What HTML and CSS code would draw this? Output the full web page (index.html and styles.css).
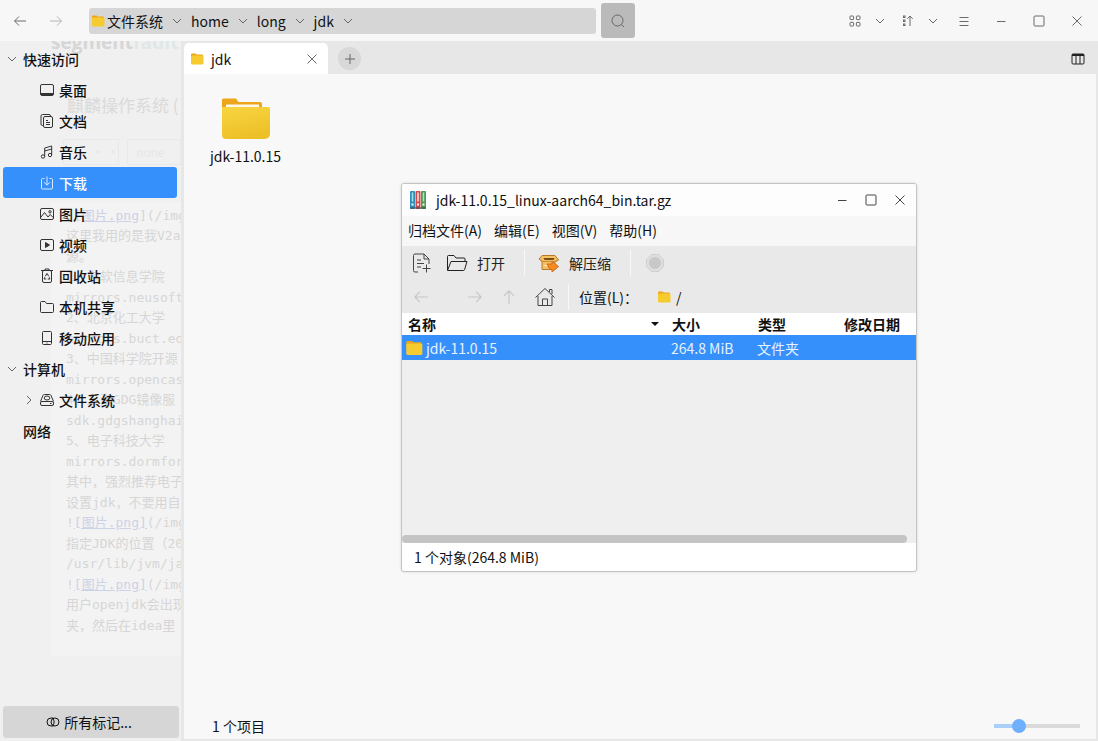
FILE: index.html
```html
<!DOCTYPE html>
<html lang="zh-CN">
<head>
<meta charset="utf-8">
<title>jdk</title>
<link rel="stylesheet" href="styles.css">
</head>
<body>
<svg class="defs" width="0" height="0" aria-hidden="true">
  <defs>
    <linearGradient id="gold" x1="0" y1="0" x2="0.3" y2="1"><stop offset="0" stop-color="#f8d541"/><stop offset="1" stop-color="#edc028"/></linearGradient>
    <symbol id="chev" viewBox="0 0 10 10"><path d="M1 3 5 7 9 3"/></symbol>
    <symbol id="arrow" viewBox="0 0 16 16"><path d="M14 8H2.500M7 3.500 2.500 8 7 12.500"/></symbol>
    <symbol id="close" viewBox="0 0 12 12"><path d="M1.500 1.500l9 9M10.500 1.500l-9 9"/></symbol>
    <symbol id="max" viewBox="0 0 12 12"><rect x="1" y="1" width="10" height="10" rx="1"/></symbol>
    <symbol id="min" viewBox="0 0 12 12"><path d="M2 6.500h8.500"/></symbol>
    <symbol id="folder" viewBox="0 0 14 12"><path d="M1 1.500a1 1 0 0 1 1-1h3.500l1 1H12a1 1 0 0 1 1 1V6H1z" fill="#eda51c" stroke="none"/><rect x="1" y="2.500" width="12.500" height="9" rx="1.200" fill="#f5cb30" stroke="none"/></symbol>
  </defs>
</svg>

<header class="topbar">
  <nav class="history">
    <button class="icon-btn" aria-label="后退"><svg class="i16"><use href="#arrow"/></svg></button>
    <button class="icon-btn faded" aria-label="前进"><svg class="i16 flip"><use href="#arrow"/></svg></button>
  </nav>
  <nav class="path" aria-label="路径">
    <svg class="folder-sm"><use href="#folder"/></svg>
    <button class="crumb">文件系统</button><svg class="chev"><use href="#chev"/></svg>
    <button class="crumb">home</button><svg class="chev"><use href="#chev"/></svg>
    <button class="crumb">long</button><svg class="chev"><use href="#chev"/></svg>
    <button class="crumb">jdk</button><svg class="chev"><use href="#chev"/></svg>
  </nav>
  <button class="search" aria-label="搜索"><svg class="i16" viewBox="0 0 16 16"><circle cx="7.500" cy="7.500" r="5.500"/><path d="M11.500 11.500l2.500 2.500"/></svg></button>
  <div class="spacer"></div>
  <div class="tools">
    <button class="icon-btn" aria-label="视图"><svg class="i12" viewBox="0 0 12 12"><rect x="1" y="1" width="3.600" height="3.600" rx=".6"/><rect x="7.400" y="1" width="3.600" height="3.600" rx=".6"/><rect x="1" y="7.400" width="3.600" height="3.600" rx=".6"/><rect x="7.400" y="7.400" width="3.600" height="3.600" rx=".6"/></svg></button>
    <button class="icon-btn" aria-label="视图选项"><svg class="chev"><use href="#chev"/></svg></button>
  </div>
  <div class="tools">
    <button class="icon-btn" aria-label="排序"><svg class="i12" viewBox="0 0 12 12"><rect x="1.500" y="1" width="1.500" height="1.500"/><rect x="1.500" y="5" width="1.500" height="1.500"/><rect x="1.500" y="9" width="1.500" height="1.500"/><path d="M8 11V1M5.300 3.800 8 1l2.700 2.800"/></svg></button>
    <button class="icon-btn" aria-label="排序选项"><svg class="chev"><use href="#chev"/></svg></button>
  </div>
  <div class="window-tools">
    <button class="icon-btn menu-btn" aria-label="菜单"><svg class="i12" viewBox="0 0 12 12"><path d="M1.500 2.500h9M1.500 6.500h9M1.500 10.500h9"/></svg></button>
    <button class="icon-btn" aria-label="最小化"><svg class="i12"><use href="#min"/></svg></button>
    <button class="icon-btn" aria-label="最大化"><svg class="i12"><use href="#max"/></svg></button>
    <button class="icon-btn" aria-label="关闭"><svg class="i12"><use href="#close"/></svg></button>
  </div>
</header>

<div class="body">
  <aside class="sidebar">
    <div class="ghost" aria-hidden="true">
      <div class="ghost-logo">segment<span>fault</span></div>
      <div class="ghost-title">麒麟操作系统 (</div>
      <div class="ghost-bar"><span>· ·</span><span>none</span></div>
      <div class="ghost-page">
        <p>![<u>图片.png</u>](/img</p><p>这里我用的是我V2a</p><p>源。</p><p>1、东软信息学院</p><p>mirrors.neusoft</p><p>2、北京化工大学</p><p>mirrors.buct.edu</p><p>3、中国科学院开源</p><p>mirrors.opencas</p><p>4、上海GDG镜像服</p><p>sdk.gdgshanghai</p><p>5、电子科技大学</p><p>mirrors.dormfor</p><p>其中，强烈推荐电子</p><p>设置jdk，不要用自</p><p>!<u>[图片.png]</u>(/img</p><p>指定JDK的位置（20</p><p>/usr/lib/jvm/ja</p><p>!<u>[图片.png]</u>(/img</p><p>用户openjdk会出现</p><p>夹，然后在idea里</p>
      </div>
    </div>
    <nav class="places">
      <button class="group"><svg class="chev"><use href="#chev"/></svg>快速访问</button>
      <button class="place"><svg class="i16" viewBox="0 0 16 16"><rect x="1.500" y="2.500" width="13" height="11" rx="1.500"/><path d="M2 11.500h12M2 12.500h12"/></svg>桌面</button>
      <button class="place"><svg class="i16" viewBox="0 0 16 16"><path d="M4.500 12.500h-1a1.500 1.500 0 0 1-1.500-1.500V3a1.500 1.500 0 0 1 1.500-1.500h6.500a1.500 1.500 0 0 1 1.500 1.500"/><rect x="4.500" y="3.500" width="9" height="11" rx="1.500"/><path d="M7 7.500h2M7 9.500h4M7 11.500h4"/></svg>文档</button>
      <button class="place"><svg class="i16" viewBox="0 0 16 16"><circle cx="4" cy="12.500" r="1.700"/><circle cx="11" cy="11" r="1.700"/><path d="M5.700 12.500V4l7-2v9M5.700 7l7-2"/></svg>音乐</button>
      <button class="place active"><svg class="i16" viewBox="0 0 16 16"><path d="M5.500 3.500h-2a1 1 0 0 0-1 1v8.500a1 1 0 0 0 1 1h9a1 1 0 0 0 1-1V4.500a1 1 0 0 0-1-1h-2M8 1.500v8.500M5 7.200l3 3 3-3"/></svg>下载</button>
      <button class="place"><svg class="i16" viewBox="0 0 16 16"><rect x="1.500" y="2.500" width="13" height="11" rx="1.500"/><path d="M2 11l3.500-4.500L9 11l2.200-2.500 3 3"/><circle cx="11" cy="5.800" r="1.200"/></svg>图片</button>
      <button class="place"><svg class="i16" viewBox="0 0 16 16"><rect x="1.500" y="2.500" width="13" height="11" rx="1.500"/><path d="M6.500 5.500v5L10.500 8z" fill="currentColor"/></svg>视频</button>
      <button class="place"><svg class="i16" viewBox="0 0 16 16"><path d="M2 2.500h12M6 2.500V1h4v1.500"/><rect x="3.500" y="2.500" width="9" height="12" rx="1.500"/><path d="M6.200 8.300 8 5.500l1.800 2.800M10.300 9.300l.6 1.700H8.800M7.200 11H5.100l.6-1.700"/></svg>回收站</button>
      <button class="place"><svg class="i16" viewBox="0 0 16 16"><path d="M1.500 3.500a1 1 0 0 1 1-1H6l1.500 2h6a1 1 0 0 1 1 1v7a1 1 0 0 1-1 1h-11a1 1 0 0 1-1-1z"/></svg>本机共享</button>
      <button class="place"><svg class="i16" viewBox="0 0 16 16"><rect x="3.500" y="1.500" width="9" height="13" rx="1"/><path d="M3.500 11.500h9M7.500 13h1"/></svg>移动应用</button>
      <button class="group"><svg class="chev"><use href="#chev"/></svg>计算机</button>
      <button class="place tree"><svg class="chev side"><use href="#chev"/></svg><svg class="i16" viewBox="0 0 16 16"><path d="M1.500 9.500 4 3.300a1.500 1.500 0 0 1 1.300-.8h5.400a1.500 1.500 0 0 1 1.300.8l2.500 6.200"/><rect x="1.500" y="9.500" width="13" height="4" rx="1.500"/><ellipse cx="8" cy="6" rx="2.800" ry="2"/><path d="M11 11.500h1.500"/></svg>文件系统</button>
      <button class="group plain">网络</button>
    </nav>
    <button class="tags"><svg class="i14" viewBox="0 0 14 14"><path d="M7.500 3H5a4 4 0 0 0 0 8h2.500"/><ellipse cx="9" cy="7" rx="4" ry="4"/><path d="M6.500 3.500a4.500 4.500 0 0 1 0 7"/></svg>所有标记...</button>
  </aside>

  <main class="main">
    <div class="tabs">
      <div class="tab"><svg class="folder-sm"><use href="#folder"/></svg><span>jdk</span><button class="icon-btn" aria-label="关闭标签"><svg class="i12"><use href="#close"/></svg></button></div>
      <button class="add" aria-label="新建标签"><svg class="i12" viewBox="0 0 12 12"><path d="M6 1v10M1 6h10"/></svg></button>
      <button class="icon-btn columns" aria-label="预览"><svg class="i14" viewBox="0 0 14 14"><rect x="1" y="2" width="12" height="10" rx="1"/><path d="M1 3h12" stroke-width="2"/><path d="M5 3v9M9 3v9"/></svg></button>
    </div>
    <section class="files">
      <button class="file">
        <svg class="folder-lg" viewBox="0 0 50 42"><path d="M1 2a1.500 1.500 0 0 1 1.500-1.500H15L17.500 4H39a2 2 0 0 1 2 2v8H1z" fill="#eda51c"/><path d="M5 6.500h33V11H5z" fill="#fff8e8"/><path d="M1 9h46a2 2 0 0 1 2 2v25a5 5 0 0 1-5 5H5a4 4 0 0 1-4-4z" fill="url(#gold)"/></svg>
        <span>jdk-11.0.15</span>
      </button>
    </section>
    <footer class="status">
      <span>1 个项目</span>
      <input class="zoom" type="range" min="0" max="100" value="25" aria-label="图标大小">
    </footer>

    <section class="archive">
      <header class="a-title">
        <svg class="books" viewBox="0 0 18 20"><rect x="1" y="1" width="5" height="18" rx="1" fill="#2e8fb8"/><rect x="6.500" y="1" width="5" height="18" rx="1" fill="#d8484a"/><rect x="12" y="1" width="5" height="18" rx="1" fill="#4f9a50"/><path d="M3.500 2.500v9M14.500 2.500v9" stroke="#a9dfe8" stroke-width="1.500"/><path d="M9 2.500v9" stroke="#f5c1bb" stroke-width="2"/><path d="M2.500 14.500h2M8 14.500h2M13.500 14.500h2" stroke="#fff" stroke-width="2"/><path d="M1 18h16" stroke="#3b4856"/></svg>
        <h1>jdk-11.0.15_linux-aarch64_bin.tar.gz</h1>
        <button class="icon-btn" aria-label="最小化"><svg class="i12"><use href="#min"/></svg></button>
        <button class="icon-btn" aria-label="最大化"><svg class="i12"><use href="#max"/></svg></button>
        <button class="icon-btn" aria-label="关闭"><svg class="i12"><use href="#close"/></svg></button>
      </header>
      <nav class="a-menu"><button>归档文件(A)</button><button>编辑(E)</button><button>视图(V)</button><button>帮助(H)</button></nav>
      <div class="a-tools">
        <div class="a-row">
          <button class="tool" aria-label="新建"><svg class="i22" viewBox="0 0 22 22"><path d="M7 20H4a1.500 1.500 0 0 1-1.500-1.500v-15A1.500 1.500 0 0 1 4 2h9l5 5v5M13 2v5h5M6 8h4M6 11.500h7M6 15h4M15.500 12.500v8M11.500 16.500h8"/></svg></button>
          <button class="tool open"><svg class="i22" viewBox="0 0 22 22"><path d="M1.500 18V4.500a1 1 0 0 1 1-1H8l2 2.500h8a1 1 0 0 1 1 1v2M1.500 18.500 5 9.500h16l-2.500 8.300a1 1 0 0 1-1 .7z"/></svg>打开</button>
          <i class="sep"></i>
          <button class="tool extract"><svg class="i22" viewBox="0 0 22 22"><path d="M4 3.500h13l3.500 4.500-3.500 1.500v8H4v-8L1 7z" fill="#f4c064" stroke="#b8792a"/><path d="M5.500 6h11l-1 2h-9z" fill="#7a4c14" stroke="none"/><path d="M1 7l3 2.500h13L20.500 8" stroke="#c98a35"/><path d="M6.500 13.500h3" stroke="#fff3d6"/><path d="M9 12h5V9.500l6.500 5-6.500 5.500V17.500h-2z" fill="#f68b1f" stroke="#d06c18"/></svg>解压缩</button>
          <i class="sep"></i>
          <button class="tool" aria-label="停止" disabled><svg class="i22" viewBox="0 0 22 22"><path d="M7.500 2.500h7l5 5v7l-5 5h-7l-5-5v-7z" fill="#dedede" stroke="#cfcfcf"/><circle cx="11" cy="11" r="6" fill="#c8c8c8" stroke="none"/></svg></button>
        </div>
        <div class="a-row">
          <button class="tool nav-b" aria-label="后退" disabled><svg class="i18" viewBox="0 0 16 16"><use href="#arrow"/></svg></button>
          <button class="tool nav-f" aria-label="前进" disabled><svg class="i18 flip" viewBox="0 0 16 16"><use href="#arrow"/></svg></button>
          <button class="tool nav-u" aria-label="向上" disabled><svg class="i18 up" viewBox="0 0 16 16"><use href="#arrow"/></svg></button>
          <button class="tool nav-h" aria-label="主目录"><svg class="i22" viewBox="0 0 22 22"><path d="M1.500 11.500 11 2.500l9.500 9M15.500 6V3.500H18V8M4 10v9.500h14V10M8.500 19.500V13h5v6.500"/></svg></button>
          <i class="sep"></i>
          <label for="loc">位置(L)：</label>
          <svg class="folder-sm"><use href="#folder"/></svg>
          <input id="loc" type="text" value="/">
        </div>
      </div>
      <div class="list">
        <table>
          <colgroup><col class="c-name"><col class="c-mid"><col class="c-mid"><col class="c-date"></colgroup>
          <thead><tr><th><div class="sort">名称<svg viewBox="0 0 10 6"><path d="M1 1h8L5 5z" fill="#111" stroke="none"/></svg></div></th><th>大小</th><th>类型</th><th>修改日期</th></tr></thead>
          <tbody><tr><td><div class="entry"><svg viewBox="0 0 14 12"><use href="#folder"/></svg>jdk-11.0.15</div></td><td>264.8 MiB</td><td>文件夹</td><td></td></tr></tbody>
        </table>
        <div class="scroll"></div>
      </div>
      <footer class="a-status">1 个对象(264.8 MiB)</footer>
    </section>
  </main>
</div>
</body>
</html>
```

FILE: styles.css
```css
* { box-sizing: border-box; }
body {
  margin: 0;
  min-height: 100vh;
  display: flex;
  flex-direction: column;
  background: #f7f7f7;
  color: #111;
  font: 14px/20px "Noto Sans CJK SC", sans-serif;
}
button, input {
  font: inherit;
  color: inherit;
  border: 0;
  padding: 0;
  background: none;
}
p, h1 { margin: 0; font: inherit; }
svg { fill: none; stroke: currentColor; stroke-width: 1; flex: none; display: block; }
.defs { position: absolute; }
.i12 { width: 12px; height: 12px; }
.i14 { width: 14px; height: 14px; }
.i16 { width: 16px; height: 16px; }
.i18 { width: 18px; height: 18px; }
.i22 { width: 22px; height: 22px; }
.flip { transform: rotate(180deg); }
.up { transform: rotate(90deg); }
.chev { width: 10px; height: 10px; color: #666; }
.side { transform: rotate(-90deg); }
.folder-sm { width: 14px; height: 12px; }
.icon-btn {
  width: 24px;
  height: 24px;
  display: grid;
  place-items: center;
  color: #6b6b6b;
}

/* top bar */
.topbar { display: flex; align-items: center; height: 41px; padding-right: 9px; }
.history { display: flex; gap: 12px; padding: 0 21px 0 8px; }
.faded { color: #b5b5b5; }
.path {
  flex: 17;
  display: flex;
  align-items: center;
  height: 26px;
  padding-left: 2px;
  border-radius: 3px;
  background: #d6d6d6;
}
.path .crumb { margin-left: 2px; }
.path .chev { margin: 0 7px 0 9px; }
.search {
  width: 34px;
  height: 35px;
  margin-left: 5px;
  display: grid;
  place-items: center;
  border-radius: 3px;
  background: #bababa;
  color: #666;
}
.spacer { flex: 7; }
.tools { display: flex; gap: 1px; margin-right: 4px; }
.window-tools { display: flex; gap: 14px; padding-left: 3px; }
.menu-btn { margin-right: -1px; }

.body { flex: 1; display: flex; }

/* sidebar */
.sidebar {
  position: relative;
  width: 181px;
  flex: none;
  display: flex;
  flex-direction: column;
  justify-content: space-between;
  padding: 2px 3px 3px;
  background: #f0f0f0;
}
.places { position: relative; display: flex; flex-direction: column; font-weight: 500; }
.group, .place { display: flex; align-items: center; height: 31px; text-align: left; }
.group { gap: 6px; padding-left: 4px; }
.group.plain { padding-left: 20px; }
.place { gap: 4px; padding-left: 36px; margin-right: 1px; border-radius: 3px; }
.place .i16 { color: #333; }
.place.tree { padding-left: 21px; }
.place.tree .chev { margin-right: 1px; }
.place.active { background: #3590fb; color: #fff; }
.place.active .i16 { color: #d9eaff; }
.tags {
  position: relative;
  display: flex;
  align-items: center;
  justify-content: center;
  gap: 4px;
  height: 32px;
  padding-right: 4px;
  margin-right: -1px;
  border-radius: 3px;
  background: #d6d6d6;
}

/* document showing faintly through the translucent sidebar */
.ghost {
  position: absolute;
  inset: 0;
  overflow: hidden;
  white-space: nowrap;
  color: #d6d6d6;
  padding-left: 51px;
}
.ghost-logo { height: 14px; line-height: 2px; font-size: 19px; font-weight: 700; font-family: "Open Sans", sans-serif; }
.ghost-logo span { color: #dfe8e6; }
.ghost-title { padding: 38px 0 0 16px; height: 84px; font-size: 17px; line-height: 24px; color: #dadada; }
.ghost-bar { display: flex; gap: 8px; padding-left: 12px; height: 63px; font-size: 12px; line-height: 24px; color: #e6e6e6; }
.ghost-bar span { width: 56px; height: 26px; padding-left: 28px; border: 1px solid #e9e9e9; }
.ghost-bar span + span { padding-left: 8px; }
.ghost-page {
  display: grid;
  grid-auto-rows: 20px 21px;
  padding: 4px 0 20px 15px;
  background: #f3f3f3;
  font: 13px/20px "DejaVu Sans Mono", "Noto Sans CJK SC", monospace;
}
.ghost u { color: #ccd2e6; }

/* main pane */
.main {
  position: relative;
  flex: 1;
  display: flex;
  flex-direction: column;
  padding: 0 2px 2px 3px;
  background: #e7e7e7;
}
.tabs { display: flex; align-items: center; height: 33px; padding-top: 2px; }
.tab {
  width: 144px;
  height: 31px;
  display: flex;
  align-items: center;
  gap: 7px;
  padding: 0 4px 0 6px;
  border-radius: 5px 5px 0 0;
  background: #fff;
}
.tab span { flex: 1; }
.add {
  width: 23px;
  height: 23px;
  margin-left: 10px;
  display: grid;
  place-items: center;
  border-radius: 50%;
  background: #d8d8d8;
  color: #666;
}
.columns { margin: 0 6px 0 auto; color: #222; }
.files { flex: 1; padding: 24px 0 0 21px; background: #f8f8f8; }
.file { display: flex; flex-direction: column; align-items: center; gap: 6px; width: 81px; }
.folder-lg { width: 50px; height: 42px; stroke: none; }
.status {
  display: flex;
  align-items: center;
  justify-content: space-between;
  height: 26px;
  padding: 0 16px 0 28px;
  background: #f8f8f8;
}
.zoom {
  appearance: none;
  width: 86px;
  height: 14px;
  margin: 0;
  background: linear-gradient(to right, #a9cffb 25%, #dadada 25%) center / 100% 4px no-repeat;
}
.zoom::-webkit-slider-thumb {
  appearance: none;
  width: 14px;
  height: 14px;
  border-radius: 50%;
  background: #6eb0fb;
}

/* archive manager window */
.archive {
  position: absolute;
  left: 220px;
  top: 142px;
  width: 516px;
  height: 389px;
  display: flex;
  flex-direction: column;
  border: 1px solid #c4c4c4;
  border-radius: 3px;
  overflow: hidden;
  background: #fff;
  box-shadow: 0 0 3px #0002;
}
.a-title { display: flex; align-items: center; gap: 5px; height: 32px; padding: 0 4px 0 7px; background: #fdfdfd; }
.a-title h1 { flex: 1; padding-left: 4px; }
.a-title .icon-btn { color: #444; }
.books { width: 18px; height: 20px; stroke: none; }
.a-menu { display: flex; align-items: center; gap: 12px; height: 30px; padding: 0 0 2px 6px; background: #f7f7f7; }
.a-tools { background: #e9e9e9; }
.a-row { display: flex; align-items: center; height: 34px; padding-left: 9px; }
.a-row + .a-row { height: 33px; padding-left: 10px; }
.tool { display: flex; align-items: center; gap: 9px; color: #444; }
.tool:disabled { color: #c6c6c6; }
.open { margin-left: 13px; color: #222; }
.extract { color: #222; }
.sep { width: 1px; height: 26px; margin: 0 13px 0 19px; background: #f8f8f8; }
.nav-f { margin-left: 36px; }
.nav-u { margin-left: 16px; }
.nav-h { margin-left: 16px; }
.a-row + .a-row .sep { margin: 0 10px 0 12px; }
#loc { flex: 1; min-width: 0; padding-left: 5px; outline: 0; }
.a-row label { width: 78px; }
.list { flex: 1; display: flex; flex-direction: column; justify-content: space-between; background: #efefef; }
table { width: 100%; table-layout: fixed; border-collapse: collapse; }
.c-name { width: 264px; }
.c-mid { width: 86px; }
th, td { padding: 0 0 0 5px; text-align: left; white-space: nowrap; }
th { height: 22px; background: #fff; font-weight: 700; padding-left: 6px; }
td { height: 25px; background: #3590fb; color: #e8f2ff; }
td:first-child { padding-left: 3px; }
.sort { display: flex; align-items: center; justify-content: space-between; padding-right: 6px; }
.sort svg { width: 10px; height: 6px; }
.entry { display: flex; align-items: center; gap: 3px; }
.entry svg { width: 18px; height: 16px; }
.scroll { height: 8px; margin-right: 9px; border-radius: 4px; background: #c4c4c4; }
.a-status { height: 28px; padding: 4px 12px; }
```
